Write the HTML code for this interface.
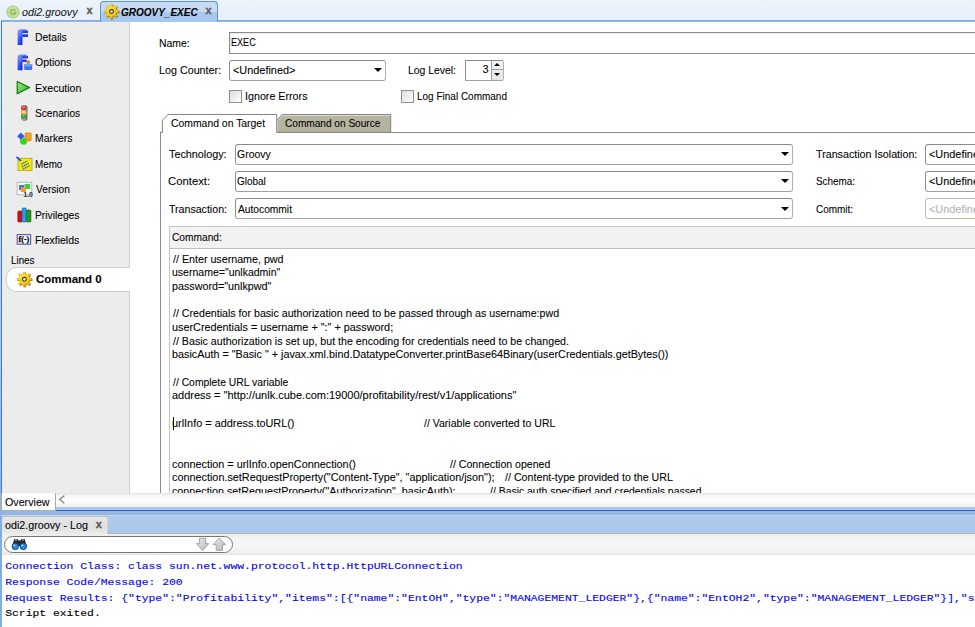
<!DOCTYPE html>
<html>
<head>
<meta charset="utf-8">
<title>GROOVY_EXEC</title>
<style>
html,body{margin:0;padding:0;}
body{width:975px;height:627px;overflow:hidden;background:#fff;position:relative;
 font-family:"Liberation Sans",sans-serif;font-size:11.0px;color:#000;}
div,span{box-sizing:border-box;}
.abs{position:absolute;}
svg{position:absolute;overflow:visible;}
.t{position:absolute;white-space:pre;line-height:14px;height:14px;transform-origin:0 50%;-webkit-text-stroke:0.08px currentColor;}
#codeclip{position:absolute;left:0;top:0;width:975px;height:493px;overflow:hidden;}
/* top tab bar */
#topbar{left:0;top:0;width:975px;height:21px;background:linear-gradient(#eef4fc,#e7f0fb 60%,#eaf2fc);}
#topline{left:1px;top:20px;width:974px;height:2px;background:linear-gradient(#7fa6dc,#9fbde6);}
#tab2{left:100px;top:1px;width:118px;height:21px;border:1px solid #5f92d8;border-bottom:none;border-radius:4px 4px 0 0;
 background:linear-gradient(#c9dcf4 0,#c4d8f2 48%,#a9c8ee 52%,#a6c9ef 100%);}
/* left panel */
#left{left:2px;top:22px;width:128px;height:471px;background:#ececec;border-right:1px solid #d0d0d0;}
#sel{left:6px;top:267px;width:124px;height:25px;background:#fff;border:1px solid #cfcfcf;border-right:none;border-radius:10px 0 0 10px;}
/* form */
.inp{position:absolute;border:1px solid #8b8b8b;background:#fff;height:22px;box-shadow:inset 1px 1px 0 #ececec;}
.cmb{position:absolute;border:1px solid #a0a0a0;border-top-color:#8a8a8a;border-left-color:#8e8e8e;border-right-color:#b0b0b0;background:#fff;height:21px;border-radius:3px;}
.arr{position:absolute;width:0;height:0;border-left:4.2px solid transparent;border-right:4.2px solid transparent;border-top:4.4px solid #000;}
.chk{position:absolute;width:13px;height:13px;border:1px solid #8e8f8f;background:linear-gradient(135deg,#dcdcdc,#fff);}
.log{position:absolute;left:5.2px;white-space:pre;font-family:"Liberation Mono",monospace;font-size:11.38px;line-height:14px;height:14px;color:#0606f0;-webkit-text-stroke:0.15px currentColor;transform:scaleY(0.86);transform-origin:0 11px;}
.x{position:absolute;white-space:pre;line-height:14px;height:14px;font-weight:bold;font-size:11px;color:#5a5a5a;-webkit-text-stroke:0.3px currentColor;}
</style>
</head>
<body>
<!-- top tab bar -->
<div class="abs" id="topbar"></div>
<div class="abs" id="topline"></div>
<svg style="left:5.9px;top:4.7px" width="14" height="14" viewBox="0 0 14 14"><circle cx="7" cy="7" r="6.1" fill="#c2e293" stroke="#a3c478" stroke-width="0.9"/><text x="7" y="10.1" font-family="Liberation Sans, sans-serif" font-size="8.6" font-weight="bold" fill="#8fae68" text-anchor="middle">G</text></svg>
<div class="x" style="left:86.5px;top:2.5px;">x</div>
<div class="abs" id="tab2"></div>
<svg style="left:102.8px;top:3.4px" width="17" height="17" viewBox="-8.5 -8.5 17 17"><path d="M-1.19,-4.96 L-1.23,-7.40 L1.23,-7.40 L1.19,-4.96 L2.67,-4.35 L4.36,-6.10 L6.10,-4.36 L4.35,-2.67 L4.96,-1.19 L7.40,-1.23 L7.40,1.23 L4.96,1.19 L4.35,2.67 L6.10,4.36 L4.36,6.10 L2.67,4.35 L1.19,4.96 L1.23,7.40 L-1.23,7.40 L-1.19,4.96 L-2.67,4.35 L-4.36,6.10 L-6.10,4.36 L-4.35,2.67 L-4.96,1.19 L-7.40,1.23 L-7.40,-1.23 L-4.96,-1.19 L-4.35,-2.67 L-6.10,-4.36 L-4.36,-6.10 L-2.67,-4.35Z" fill="#5a4206" transform="translate(0.5 0.5)" opacity="0.9"/>
   <path d="M-1.19,-4.96 L-1.23,-7.40 L1.23,-7.40 L1.19,-4.96 L2.67,-4.35 L4.36,-6.10 L6.10,-4.36 L4.35,-2.67 L4.96,-1.19 L7.40,-1.23 L7.40,1.23 L4.96,1.19 L4.35,2.67 L6.10,4.36 L4.36,6.10 L2.67,4.35 L1.19,4.96 L1.23,7.40 L-1.23,7.40 L-1.19,4.96 L-2.67,4.35 L-4.36,6.10 L-6.10,4.36 L-4.35,2.67 L-4.96,1.19 L-7.40,1.23 L-7.40,-1.23 L-4.96,-1.19 L-4.35,-2.67 L-6.10,-4.36 L-4.36,-6.10 L-2.67,-4.35Z" fill="url(#gG)" stroke="#d4a410" stroke-width="0.3" stroke-linejoin="round"/>
   <circle cx="0" cy="0" r="1.9" fill="#fff" stroke="#3a2c08" stroke-width="1.1"/></svg>
<div class="x" style="left:205.5px;top:2.5px;color:#5c5c5c;">x</div>

<!-- left panel -->
<div class="abs" id="left"></div>
<div class="abs" style="left:0;top:21px;width:1px;height:472px;background:linear-gradient(#e6effa,#8fb4e4);"></div>
<div class="abs" style="left:1px;top:21px;width:1px;height:472px;background:#3f79d1;"></div>
<div class="abs" id="sel"></div>

<!-- icons -->
<svg style="left:0;top:0" width="40" height="300" viewBox="0 0 40 300">
 <defs>
  <linearGradient id="gF" x1="0" y1="0" x2="0.6" y2="1"><stop offset="0" stop-color="#93a4fb"/><stop offset="0.45" stop-color="#4a68f6"/><stop offset="1" stop-color="#0a2cf0"/></linearGradient>
  <linearGradient id="gP" x1="0" y1="0" x2="1" y2="1"><stop offset="0" stop-color="#9cf07c"/><stop offset="1" stop-color="#22b414"/></linearGradient>
  <radialGradient id="gG" cx="0.4" cy="0.35" r="0.8"><stop offset="0" stop-color="#ffe34a"/><stop offset="0.6" stop-color="#f7c40f"/><stop offset="1" stop-color="#c98a00"/></radialGradient>
  
 </defs>
 <!-- Details -->
 <g id="Ficon"><path d="M17.6 31.6 Q17.6 29.4 19.6 29.3 H25.4 L27.6 30.6 H28 V33 H22.6 V34.4 H28 V36.7 H22.3 V45 H17.6Z" fill="url(#gF)"/>
 <path d="M22 31.3 H28 V33 H22.4Z M22.4 34.5 H28 V36.7 H22.3Z" fill="#1838f2"/>
 <path d="M20.6 37 H22.3 V45 H20.6Z" fill="#0c2cec" opacity="0.8"/></g>
 <!-- Options -->
 <g transform="translate(0 25.3)"><path d="M17.6 31.6 Q17.6 29.4 19.6 29.3 H25.4 L27.6 30.6 H28 V33 H22.6 V34.4 H27 V36.7 H22.3 V45 H17.6Z" fill="url(#gF)"/>
 <path d="M22 31.3 H28 V33 H22.4Z M22.4 34.5 H26 V36.7 H22.3Z" fill="#1838f2"/>
 <path d="M20.6 37 H22.3 V45 H20.6Z" fill="#0c2cec" opacity="0.8"/></g>
 <rect x="24.2" y="64" width="8" height="6" rx="0.8" fill="#3f74ea"/>
 <rect x="24.2" y="64" width="8" height="2.4" rx="0.8" fill="#6f9cf4"/>
 <circle cx="28.2" cy="62.2" r="1.9" fill="#c58a4a"/>
 <!-- Execution -->
 <path d="M17.2 81.4 L29.6 87.5 L17.2 93.8Z" fill="url(#gP)" stroke="#0d6a0d" stroke-width="1.1" stroke-linejoin="round"/>
 <!-- Scenarios -->
 <rect x="21.4" y="105.2" width="6" height="15.4" rx="2" fill="#4a4a4a"/>
 <rect x="21" y="104.9" width="5.7" height="15" rx="2" fill="#a4a4a4"/>
 <ellipse cx="23.8" cy="108.1" rx="2.7" ry="2" fill="#e01c26"/><ellipse cx="23.8" cy="112.3" rx="2.6" ry="1.9" fill="#f3bb30"/><ellipse cx="23.8" cy="116.5" rx="2.7" ry="2" fill="#1a9420"/>
 <ellipse cx="23.7" cy="107.5" rx="1.4" ry="0.7" fill="#ffa0a0"/><ellipse cx="23.7" cy="111.9" rx="1.4" ry="0.7" fill="#fff3b0"/><ellipse cx="23.7" cy="116.1" rx="1.4" ry="0.7" fill="#c6f6c0"/>
 <!-- Markers -->
 <rect x="25.2" y="133" width="5.9" height="7.7" rx="0.6" fill="#f7a21c" stroke="#c8780a" stroke-width="0.7"/>
 <path d="M20.9 132.6 L24.6 136.3 L20.9 140 L17.2 136.3Z" fill="#2f58f4"/>
 <circle cx="23.6" cy="141.2" r="3.5" fill="#3fd023"/>
 <!-- Memo -->
 <rect x="18" y="158.2" width="14" height="12.5" fill="#f1e90a" stroke="#a89a10" stroke-width="0.7"/>
 <path d="M21.4 164.2 L27.4 161 M21.8 167 L28.6 163.4 M23 169.2 L29.6 165.6" stroke="#2a50f0" stroke-width="1.2" stroke-dasharray="1.5 0.6" fill="none"/>
 <path d="M17 157.4 L20.4 160.4" stroke="#2346e8" stroke-width="1.8" stroke-linecap="round"/>
 <!-- Version -->
 <rect x="17.2" y="182.3" width="14.6" height="12.5" fill="#fbfcff" stroke="#a3b4c8" stroke-width="0.9"/>
 <rect x="19" y="185" width="5.3" height="5" fill="#3a73f4"/>
 <rect x="24.6" y="184" width="5.6" height="5" fill="#3fcf3c"/>
 <rect x="20.8" y="187.2" width="5.2" height="5" fill="#f99a1e"/>
 <text x="23.4" y="197" font-family="Liberation Sans, sans-serif" font-size="6.8" font-weight="bold" fill="#262c3c">1.0</text>
 <!-- Privileges -->
 <rect x="17.8" y="211" width="4.4" height="11" rx="0.9" fill="#c8141c" stroke="#8a0a10" stroke-width="0.6"/>
 <rect x="22.1" y="208" width="4.2" height="14" rx="0.9" fill="#2f9be8" stroke="#1463c0" stroke-width="0.6"/>
 <rect x="26.3" y="210" width="4.6" height="12" rx="0.9" fill="#1f9a22" stroke="#0d5c10" stroke-width="0.6"/>
 <!-- Flexfields -->
 <rect x="17.2" y="234.6" width="13.4" height="9.6" fill="#f4f4ff" stroke="#5a5aa4" stroke-width="1.1"/>
 <text x="18.6" y="242.4" font-family="Liberation Serif, serif" font-size="8" font-weight="bold" fill="#000" stroke="#000" stroke-width="0.25">f(-)</text>
 <!-- gear for selected -->
 <g transform="translate(24.4 279.3)"><path d="M-1.19,-4.96 L-1.23,-7.40 L1.23,-7.40 L1.19,-4.96 L2.67,-4.35 L4.36,-6.10 L6.10,-4.36 L4.35,-2.67 L4.96,-1.19 L7.40,-1.23 L7.40,1.23 L4.96,1.19 L4.35,2.67 L6.10,4.36 L4.36,6.10 L2.67,4.35 L1.19,4.96 L1.23,7.40 L-1.23,7.40 L-1.19,4.96 L-2.67,4.35 L-4.36,6.10 L-6.10,4.36 L-4.35,2.67 L-4.96,1.19 L-7.40,1.23 L-7.40,-1.23 L-4.96,-1.19 L-4.35,-2.67 L-6.10,-4.36 L-4.36,-6.10 L-2.67,-4.35Z" fill="#5a4206" transform="translate(0.5 0.5)" opacity="0.9"/>
   <path d="M-1.19,-4.96 L-1.23,-7.40 L1.23,-7.40 L1.19,-4.96 L2.67,-4.35 L4.36,-6.10 L6.10,-4.36 L4.35,-2.67 L4.96,-1.19 L7.40,-1.23 L7.40,1.23 L4.96,1.19 L4.35,2.67 L6.10,4.36 L4.36,6.10 L2.67,4.35 L1.19,4.96 L1.23,7.40 L-1.23,7.40 L-1.19,4.96 L-2.67,4.35 L-4.36,6.10 L-6.10,4.36 L-4.35,2.67 L-4.96,1.19 L-7.40,1.23 L-7.40,-1.23 L-4.96,-1.19 L-4.35,-2.67 L-6.10,-4.36 L-4.36,-6.10 L-2.67,-4.35Z" fill="url(#gG)" stroke="#d4a410" stroke-width="0.3" stroke-linejoin="round"/>
   <circle cx="0" cy="0" r="1.9" fill="#fff" stroke="#3a2c08" stroke-width="1.1"/></g>
</svg>

<!-- form -->
<div class="inp" style="left:228.8px;top:32px;width:760px;"></div>
<div class="cmb" style="left:228.8px;top:60px;width:157px;"></div>
<div class="arr" style="left:373.5px;top:68.3px"></div>
<div class="cmb" style="left:464.5px;top:60px;width:39.5px;border-radius:0 3px 3px 0;"></div>
<div class="abs" style="left:491px;top:61px;width:12px;height:19px;background:linear-gradient(#f4f4f4,#e6e6e6);border-left:1px solid #9a9a9a;border-radius:0 2px 2px 0;"></div>
<div class="abs" style="left:491px;top:69px;width:12px;height:1px;background:#9a9a9a;"></div>
<div class="arr" style="left:493.5px;top:63.2px;border-left-width:3.4px;border-right-width:3.4px;border-top:none;border-bottom:3.3px solid #000;"></div>
<div class="arr" style="left:493.5px;top:73.1px;border-left-width:3.4px;border-right-width:3.4px;border-top-width:3.3px;"></div>
<div class="chk" style="left:229px;top:90px"></div>
<div class="chk" style="left:401px;top:90px"></div>

<!-- tabbed pane -->
<div class="abs" style="left:160.3px;top:131.8px;width:830px;height:380px;border:1px solid #8c8c8c;"></div>
<svg style="left:0;top:0" width="400" height="140" viewBox="0 0 400 140">
 <path d="M276.7 132.3 V120.2 L282.3 114.5 H390.7 V132.3 Z" fill="#b6b4a1" stroke="#858585" stroke-width="1"/>
 <path d="M277.6 131.5 V120.6 L282.7 115.5 H390" fill="none" stroke="#dcdbd2" stroke-width="1"/>
 <path d="M162.4 133 V120.2 L168.1 114.5 H276.7 V133 Z" fill="#fff"/>
 <path d="M160.3 132.3 H162.4 V120.2 L168.1 114.5 H276.7 V132.3" fill="none" stroke="#858585" stroke-width="1"/>
</svg>

<div class="cmb" style="left:235px;top:144px;width:557.8px;"></div>
<div class="arr" style="left:780.7px;top:152px"></div>
<div class="cmb" style="left:925px;top:144px;width:80px;"></div>
<div class="cmb" style="left:235px;top:171px;width:557.8px;"></div>
<div class="arr" style="left:780.7px;top:179.2px"></div>
<div class="cmb" style="left:925px;top:171px;width:80px;"></div>
<div class="cmb" style="left:235px;top:198.4px;width:557.8px;"></div>
<div class="arr" style="left:780.7px;top:206.6px"></div>
<div class="cmb" style="left:925px;top:198.4px;width:80px;border-color:#b9b9a0;"></div>

<!-- command box -->
<div class="abs" style="left:169px;top:226px;width:820px;height:290px;border:1px solid #c4c4c4;background:#fff;"></div>
<div class="abs" style="left:170px;top:227px;width:810px;height:21.5px;background:#f2f2f2;border-bottom:1px solid #c0c0c0;"></div>
<div class="abs" style="left:172.6px;top:417px;width:1px;height:12.5px;background:#000;"></div>

<div id="codeclip">
<div class="t code" style="left:172.80px;top:252px;transform:scaleX(0.9717);">// Enter username, pwd</div>
<div class="t code" style="left:171.68px;top:265px;transform:scaleX(0.9559);">username="unlkadmin"</div>
<div class="t code" style="left:171.67px;top:279px;transform:scaleX(0.9771);">password="unlkpwd"</div>
<div class="t code" style="left:172.80px;top:306px;transform:scaleX(0.9668);">// Credentials for basic authorization need to be passed through as username:pwd</div>
<div class="t code" style="left:171.66px;top:320px;transform:scaleX(0.9848);">userCredentials = username + ":" + password;</div>
<div class="t code" style="left:172.80px;top:334px;transform:scaleX(0.9678);">// Basic authorization is set up, but the encoding for credentials need to be changed.</div>
<div class="t code" style="left:171.66px;top:347px;transform:scaleX(0.9809);">basicAuth = "Basic " + javax.xml.bind.DatatypeConverter.printBase64Binary(userCredentials.getBytes())</div>
<div class="t code" style="left:172.80px;top:375px;transform:scaleX(0.9418);">// Complete URL variable</div>
<div class="t code" style="left:171.90px;top:388px;">address = "http://unlk.cube.com:19000/profitability/rest/v1/applications"</div>
<div class="t code" style="left:171.86px;top:416px;transform:scaleX(0.9894);">urlInfo = address.toURL()</div>
<div class="t code" style="left:423.80px;top:416px;transform:scaleX(0.9562);">// Variable converted to URL</div>
<div class="t code" style="left:171.91px;top:457px;transform:scaleX(0.9841);">connection = urlInfo.openConnection()</div>
<div class="t code" style="left:450.30px;top:457px;transform:scaleX(0.9587);">// Connection opened</div>
<div class="t code" style="left:171.91px;top:470px;transform:scaleX(0.9850);">connection.setRequestProperty("Content-Type", "application/json");</div>
<div class="t code" style="left:504.60px;top:470px;transform:scaleX(0.9708);">// Content-type provided to the URL</div>
<div class="t code" style="left:171.91px;top:484px;transform:scaleX(0.9765);">connection.setRequestProperty("Authorization", basicAuth);</div>
<div class="t code" style="left:489.60px;top:484px;transform:scaleX(0.9474);">// Basic auth specified and credentials passed</div>
</div>

<!-- overview bar -->
<div class="abs" style="left:0;top:493px;width:975px;height:14px;background:linear-gradient(#e2e2e2,#f6f6f6 18%,#fcfcfc 50%,#f7f7f7 80%,#eeeeee);"></div>
<div class="abs" style="left:0;top:506.7px;width:975px;height:9.3px;background:linear-gradient(#b0caee 0,#a8c6ec 2.7px,#3068c8 3px,#3068c8 3.9px,#94b6e0 4.3px,#94b6e0 7.8px,#c0d6f0 8.2px,#c0d6f0 8.8px,#aec9e9 9.3px);"></div>
<div class="abs" style="left:2px;top:493px;width:54px;height:18px;background:#fff;border-right:1px solid #a8a8a8;border-bottom:1px solid #b0b0b0;"></div>
<div class="abs" style="left:0;top:493px;width:1px;height:23px;background:#8fb4e4;"></div>
<div class="abs" style="left:1px;top:493px;width:1px;height:18px;background:#a9a9a9;"></div>
<svg style="left:58px;top:494px" width="8" height="11" viewBox="0 0 8 11"><path d="M6.4 1.6 L1.6 5.3 L6.4 9.2" fill="none" stroke="#8c8c8c" stroke-width="1.4"/></svg>

<!-- log panel -->
<div class="abs" style="left:0;top:516px;width:975px;height:18px;background:linear-gradient(#b0cae9,#a9c8ed);"></div>
<div class="abs" style="left:0;top:533px;width:975px;height:1px;background:#b4b4b4;"></div>
<div class="abs" style="left:2px;top:516.3px;width:105.6px;height:17.7px;background:linear-gradient(#e8e8e8,#dedede 55%,#ececec);border-radius:3px 3px 0 0;border-top:1px solid #c2c2c2;border-right:1px solid #d4d4d4;"></div>
<div class="x" style="left:95.7px;top:516.5px;">x</div>
<div class="abs" style="left:2px;top:534px;width:973px;height:20.6px;background:linear-gradient(#ededed,#f5f5f5 30%,#f6f6f6 60%,#efefef 88%,#e4e4e4);"></div>
<div class="abs" style="left:2px;top:554.6px;width:973px;height:73px;background:#fff;"></div>
<div class="abs" style="left:0;top:516px;width:1.6px;height:111px;background:#82ace4;"></div>
<div class="abs" style="left:4px;top:536px;width:229px;height:16.8px;background:#fff;border:1px solid #767676;border-radius:8.5px;"></div>
<svg style="left:0;top:530px" width="240" height="30" viewBox="0 0 240 30">
 <defs><linearGradient id="gA" x1="0" y1="0" x2="1" y2="1"><stop offset="0" stop-color="#eeeeee"/><stop offset="1" stop-color="#b4b4b4"/></linearGradient></defs>
 <!-- binoculars -->
 <path d="M12.2 16 L14.2 9 H17.6 L18.4 10.6 H20.4 L21.2 9 H24.6 L26.8 16 Z" fill="#2a2a2a"/>
 <path d="M15 10 H17 M21.8 10 H23.8" stroke="#d8d8d8" stroke-width="1"/>
 <circle cx="15.3" cy="16.4" r="3.3" fill="#1f86ec" stroke="#1a2a3a" stroke-width="0.7"/>
 <circle cx="23.3" cy="16.4" r="3.3" fill="#1f86ec" stroke="#1a2a3a" stroke-width="0.7"/>
 <circle cx="14.3" cy="15.4" r="0.9" fill="#bfe0ff"/><circle cx="22.3" cy="15.4" r="0.9" fill="#bfe0ff"/>
 <!-- arrows -->
 <path d="M199.5 8.3 H205.7 V13.6 H208.7 L202.6 20.4 L196.4 13.6 H199.5Z" fill="url(#gA)" stroke="#9a9a9a" stroke-width="0.9" stroke-linejoin="round"/>
 <path d="M216.2 20.3 H222.6 V14.6 H225.6 L219.4 8 L213.1 14.6 H216.2Z" fill="url(#gA)" stroke="#9a9a9a" stroke-width="0.9" stroke-linejoin="round"/>
</svg>
<div class="t" style="left:34.79px;top:30px;transform:scaleX(0.9446);">Details</div>
<div class="t" style="left:35.12px;top:55px;transform:scaleX(0.9595);">Options</div>
<div class="t" style="left:34.88px;top:81px;transform:scaleX(0.9596);">Execution</div>
<div class="t" style="left:35.14px;top:106px;transform:scaleX(0.9229);">Scenarios</div>
<div class="t" style="left:34.89px;top:131px;transform:scaleX(0.9445);">Markers</div>
<div class="t" style="left:34.93px;top:157px;transform:scaleX(0.8949);">Memo</div>
<div class="t" style="left:35.60px;top:182px;transform:scaleX(0.9250);">Version</div>
<div class="t" style="left:34.90px;top:208px;transform:scaleX(0.9312);">Privileges</div>
<div class="t" style="left:35.09px;top:233px;transform:scaleX(0.9525);">Flexfields</div>
<div class="t" style="left:11.03px;top:253px;transform:scaleX(0.8911);">Lines</div>
<div class="t" style="left:35.78px;top:272px;transform:scaleX(1.0419);font-weight:bold;">Command 0</div>
<div class="t" style="left:159.09px;top:36px;transform:scaleX(0.9496);">Name:</div>
<div class="t" style="left:230.78px;top:35px;transform:scaleX(0.8243);">EXEC</div>
<div class="t" style="left:159.12px;top:63px;transform:scaleX(0.9766);">Log Counter:</div>
<div class="t" style="left:232.60px;top:63px;transform:scaleX(0.9903);">&lt;Undefined&gt;</div>
<div class="t" style="left:408.19px;top:63px;transform:scaleX(0.9449);">Log Level:</div>
<div class="t" style="left:482.60px;top:62px;">3</div>
<div class="t" style="left:244.83px;top:89px;transform:scaleX(0.9737);">Ignore Errors</div>
<div class="t" style="left:416.82px;top:89px;transform:scaleX(0.9084);">Log Final Command</div>
<div class="t" style="left:171.13px;top:116px;transform:scaleX(0.9455);">Command on Target</div>
<div class="t" style="left:285.24px;top:116px;transform:scaleX(0.9175);">Command on Source</div>
<div class="t" style="left:168.65px;top:147px;transform:scaleX(0.9809);">Technology:</div>
<div class="t" style="left:237.22px;top:147px;transform:scaleX(0.9514);">Groovy</div>
<div class="t" style="left:815.76px;top:147px;transform:scaleX(0.9728);">Transaction Isolation:</div>
<div class="t" style="left:928.80px;top:147px;transform:scaleX(0.9903);">&lt;Undefined&gt;</div>
<div class="t" style="left:168.39px;top:174px;transform:scaleX(1.0278);">Context:</div>
<div class="t" style="left:237.25px;top:174px;transform:scaleX(0.9041);">Global</div>
<div class="t" style="left:815.55px;top:174px;transform:scaleX(0.9000);">Schema:</div>
<div class="t" style="left:928.80px;top:174px;transform:scaleX(0.9903);">&lt;Undefined&gt;</div>
<div class="t" style="left:168.66px;top:202px;transform:scaleX(0.9644);">Transaction:</div>
<div class="t" style="left:238.00px;top:202px;transform:scaleX(0.9293);">Autocommit</div>
<div class="t" style="left:815.55px;top:202px;transform:scaleX(0.9063);">Commit:</div>
<div class="t" style="left:928.80px;top:202px;transform:scaleX(0.9903);color:#b4b4b4;">&lt;Undefined&gt;</div>
<div class="t" style="left:172.04px;top:230px;transform:scaleX(0.9257);">Command:</div>
<div class="t" style="left:5.21px;top:495px;transform:scaleX(0.9724);">Overview</div>
<div class="t" style="left:4.81px;top:518px;transform:scaleX(0.9755);">odi2.groovy - Log</div>
<div class="t" style="left:21.66px;top:5px;transform:scaleX(0.9764);font-style:italic;color:#1a1a1a;">odi2.groovy</div>
<div class="t" style="left:121.15px;top:5px;transform:scaleX(0.9083);font-style:italic;font-weight:bold;">GROOVY_EXEC</div>
<div class="log" style="top:559px">Connection Class: class sun.net.www.protocol.http.HttpURLConnection</div>
<div class="log" style="top:575px">Response Code/Message: 200</div>
<div class="log" style="top:591px">Request Results: {"type":"Profitability","items":[{"name":"EntOH","type":"MANAGEMENT_LEDGER"},{"name":"EntOH2","type":"MANAGEMENT_LEDGER"}],"size":2}</div>
<div class="log" style="top:606px;color:#000;">Script exited.</div>
</body>
</html>
